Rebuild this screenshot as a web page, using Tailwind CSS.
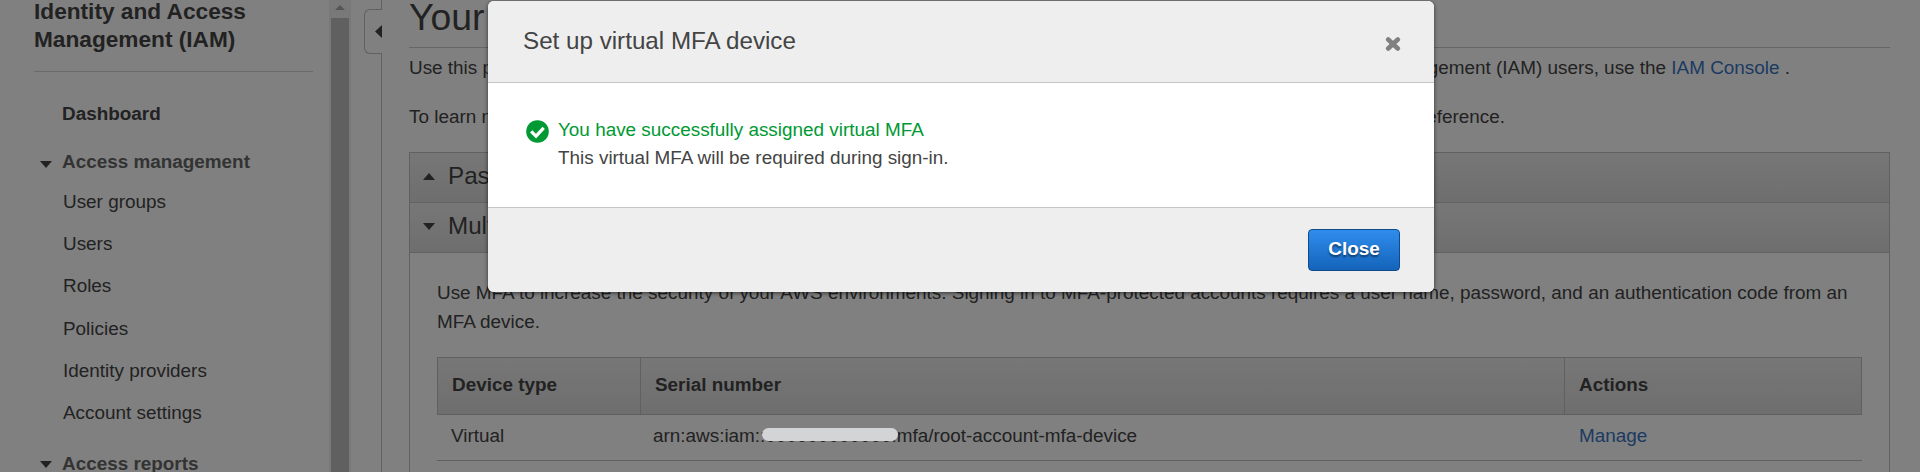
<!DOCTYPE html>
<html lang="en">
<head>
<meta charset="utf-8">
<title>Your Security Credentials</title>
<script src="https://cdn.jsdelivr.net/npm/@tailwindcss/browser@4"></script>
</head>
<body class="relative h-[472px] w-[1920px] overflow-hidden bg-[#808080] font-['Liberation_Sans',Arial,sans-serif] text-[18.9px] leading-[28px] text-[#222]">
<div class="flex h-[472px] overflow-hidden">
  <aside class="h-full w-[329px] shrink-0 overflow-hidden pl-[34px] pr-4">
    <h2 class="-mt-[3px] text-[22.67px] leading-[28px] font-bold">Identity and Access<br>Management (IAM)</h2>
    <hr class="mt-[18px] border-[#6a6a6a]">
    <nav class="pt-[28px]">
      <a class="block pl-[28px] font-bold">Dashboard</a>
      <div class="mt-5 flex items-center font-bold text-[#333]"><svg class="mt-[4px] ml-[6px] mr-[10px] h-[7px] w-[12px] shrink-0 fill-[#222]" viewBox="0 0 12 7"><path d="M0 0h12L6 7z"/></svg>Access management</div>
      <ul class="mt-[5px] pl-[29px] leading-[42.2px]">
        <li>User groups</li><li>Users</li><li>Roles</li><li>Policies</li><li>Identity providers</li><li>Account settings</li>
      </ul>
      <div class="mt-[16px] flex items-center font-bold text-[#333]"><svg class="mt-px ml-[6px] mr-[10px] h-[7px] w-[12px] shrink-0 fill-[#222]" viewBox="0 0 12 7"><path d="M0 0h12L6 7z"/></svg>Access reports</div>
    </nav>
  </aside>
  <div class="flex h-full w-[22px] shrink-0 flex-col items-center bg-[#797979]">
    <svg class="h-[18px] w-[18px] shrink-0 fill-[#555]" viewBox="0 0 18 18"><path d="M4 10l5-5 5 5z"/></svg>
    <div class="w-[18px] grow bg-[#606060]"></div>
  </div>
  <div class="flex h-full w-[31px] shrink-0 flex-col items-end">
    <div class="h-[9px] w-px bg-[#606060]"></div>
    <div class="flex h-[45px] w-[18px] items-center justify-end rounded-l-md border border-r-0 border-[#606060]"><svg class="h-[13px] w-[7px] fill-[#222]" viewBox="0 0 7 13"><path d="M7 0v13L0 6.500z"/></svg></div>
    <div class="w-px grow bg-[#606060]"></div>
  </div>
  <main class="h-full w-[1508px] shrink-0 pl-[27px]">
    <h1 class="h-[48px] border-b border-[#666] text-[37.33px] leading-[34px]">Your Security Credentials</h1>
    <p class="flex h-[40px] items-center justify-between whitespace-nowrap pr-[100px]"><span>Use this page to manage the credentials.</span><span>For AWS Identity and Access Management (IAM) users, use the <a class="text-[#1b3a62]">IAM Console</a> .</span></p>
    <p class="mt-[15px] flex justify-between whitespace-nowrap pr-[385px]"><span>To learn more about the types of</span><span>AWS credentials, see AWS Security Credentials in AWS General Reference.</span></p>
    <section class="mt-[21px] h-[330px] border border-[#606060]">
      <div class="flex h-[50px] items-center border-b border-[#626262] bg-linear-to-b from-[#777] to-[#6e6e6e] pl-[13px] text-[24.2px]"><svg class="mr-[13px] -mt-[3px] h-[7px] w-[12px] fill-[#222]" viewBox="0 0 12 7"><path d="M0 7h12L6 0z"/></svg><span class="-mt-[3px]">Password</span></div>
      <div class="flex h-[50px] items-center border-b border-[#626262] bg-linear-to-b from-[#777] to-[#6e6e6e] pl-[13px] text-[24.2px]"><svg class="mr-[13px] -mt-[3px] h-[7px] w-[12px] fill-[#222]" viewBox="0 0 12 7"><path d="M0 0h12L6 7z"/></svg><span class="-mt-[3px]">Multi-factor authentication (MFA)</span></div>
      <div class="px-[27px] pt-[25px]">
        <p class="whitespace-nowrap leading-[29px]">Use MFA to increase the security of your AWS environments. Signing in to MFA-protected accounts requires a user name, password, and an authentication code from an<br>MFA device.</p>
        <table class="mt-[21px] w-[1425px] table-fixed border-separate border-spacing-0 text-left">
          <thead><tr class="h-[58px] bg-linear-to-b from-[#777] to-[#6e6e6e]">
            <th class="w-[203px] border-y border-l border-[#606060] pl-[14px] pb-[3px]">Device type</th>
            <th class="w-[924px] border-y border-l border-[#606060] pl-[14px] pb-[3px]">Serial number</th>
            <th class="border border-[#606060] pl-[14px] pb-[3px]">Actions</th>
          </tr></thead>
          <tbody><tr class="h-[46px]">
            <td class="border-b border-[#606060] pl-[14px] pb-[4px]">Virtual</td>
            <td class="border-b border-[#606060] pl-[13px] pb-[4px]">arn:aws:iam::<span class="relative">000000000000<i class="absolute -left-[3px] top-[3px] h-[13px] w-[136px] rounded-full bg-[#d3d4d6]"></i></span>:mfa/root-account-mfa-device</td>
            <td class="border-b border-[#606060] pl-[15px] pb-[4px] text-[#1b3a62]">Manage</td>
          </tr></tbody>
        </table>
      </div>
    </section>
  </main>
</div>

<div role="dialog" class="absolute left-[488px] top-[1px] flex h-[291px] w-[946px] flex-col overflow-hidden rounded-md bg-white text-[#444] shadow-[0_1px_4px_rgba(0,0,0,0.6)]">
  <header class="flex h-[82px] shrink-0 items-center justify-between border-b border-[#c4c4c4] bg-[#eee] pl-[35px] pr-[33px]">
    <h3 class="-mt-[2px] text-[24.2px]">Set up virtual MFA device</h3>
    <svg class="mt-[5px] h-[16px] w-[16px] stroke-[#808080]" viewBox="0 0 16 16"><path d="M3.200 3.500l9.600 9M12.800 3.500l-9.600 9" stroke-width="4.600" stroke-linecap="round"/></svg>
  </header>
  <div class="flex grow items-start pt-[33px] pl-[38px]">
    <svg class="mt-[4px] mr-[9px] h-[23px] w-[23px]" viewBox="0 0 23 23"><circle cx="11.500" cy="11.500" r="11.300" fill="#093"/><path d="M5.200 11.300l4.800 4.800 7.700-8.300" fill="none" stroke="#fff" stroke-width="3.200"/></svg>
    <div><p class="text-[#093]">You have successfully assigned virtual MFA</p><p>This virtual MFA will be required during sign-in.</p></div>
  </div>
  <footer class="flex h-[85px] shrink-0 items-center justify-end border-t border-[#c4c4c4] bg-[#eee] pr-[34px]">
    <button class="h-[42px] w-[92px] rounded-[4px] border border-[#0f4a8c] bg-linear-to-b from-[#2f8ded] to-[#1464ba] pb-[2px] font-bold text-white [text-shadow:0_2px_2px_rgba(0,0,0,0.5)]">Close</button>
  </footer>
</div>
</body>
</html>
